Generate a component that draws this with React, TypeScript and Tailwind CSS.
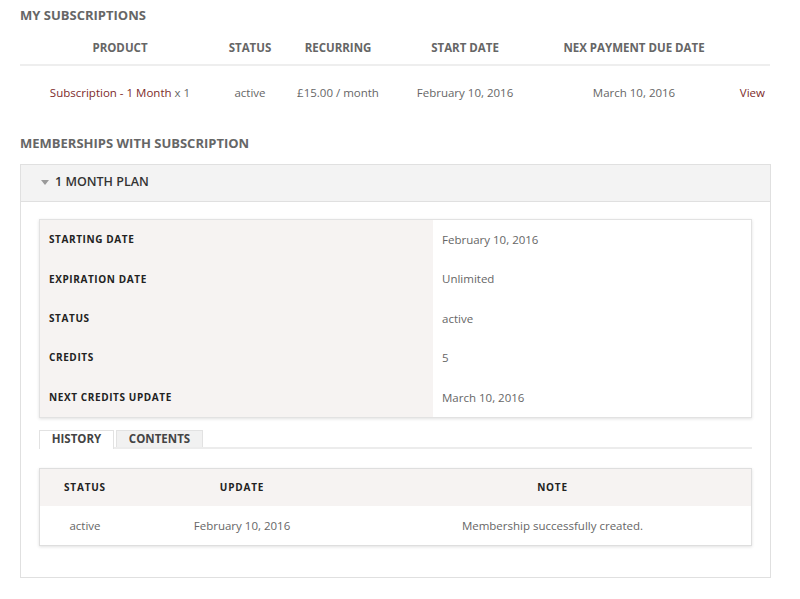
import React from "react";

const font = { fontFamily: '"Open Sans", "Liberation Sans", sans-serif' };

function InfoRow({ label, value }: { label: string; value: string }) {
  return (
    <div className="flex h-[39.4px]">
      <div className="w-[393px] bg-[#f6f3f2] flex items-center pl-[9px] text-[10px] font-bold tracking-[0.06em] text-[#222]">
        {label}
      </div>
      <div className="flex-1 flex items-center pl-[9px] text-[11.5px] text-[#666]">{value}</div>
    </div>
  );
}

export default function App() {
  return (
    <div style={font} className="bg-white w-[800px] h-[599px] px-[20px] pt-[6px] text-[#666]">
      <h2 className="text-[13px] leading-[18px] font-bold text-[#666] m-0">MY SUBSCRIPTIONS</h2>
      <div className="w-[750px] mt-[4px]">
        <div className="flex h-[38px] pt-[3px] items-center border-b-2 border-[#eeeeee] text-[11.5px] font-bold text-[#666]">
          <div className="w-[200px] text-center">PRODUCT</div>
          <div className="w-[60px] text-center">STATUS</div>
          <div className="w-[116px] text-center">RECURRING</div>
          <div className="w-[138px] text-center">START DATE</div>
          <div className="w-[200px] text-center">NEX PAYMENT DUE DATE</div>
          <div className="flex-1" />
        </div>
        <div className="flex h-[54px] items-center text-[11.5px] text-[#666]">
          <div className="w-[200px] text-center">
            <span className="text-[#7d2b2b]">Subscription - 1 Month</span> x 1
          </div>
          <div className="w-[60px] text-center">active</div>
          <div className="w-[116px] text-center">£15.00 / month</div>
          <div className="w-[138px] text-center">February 10, 2016</div>
          <div className="w-[200px] text-center">March 10, 2016</div>
          <div className="flex-1 text-right pr-[5px] text-[#7d2b2b]">View</div>
        </div>
      </div>

      <h2 className="text-[13px] leading-[18px] font-bold text-[#666] m-0 mt-[14px]">MEMBERSHIPS WITH SUBSCRIPTION</h2>

      <div className="mt-[12px] w-[751px] border border-[#e0e0e0]">
        <div className="h-[37px] bg-[#f3f3f3] border-b border-[#e0e0e0] flex items-center pl-[20px]">
          <svg width="8" height="6" viewBox="0 0 8 6" className="mr-[6px]">
            <polygon points="0,0 8,0 4,5" fill="#9a9a9a" />
          </svg>
          <span className="text-[12.5px] leading-[16px] font-semibold text-[#333] -mt-[2px]">1 MONTH PLAN</span>
        </div>
        <div className="pt-[17px] pb-[31px] pl-[18px] pr-[18px]">
          <div className="border border-[#e2e2e2] shadow-[0_1px_3px_rgba(0,0,0,0.12)]">
            <InfoRow label="STARTING DATE" value="February 10, 2016" />
            <InfoRow label="EXPIRATION DATE" value="Unlimited" />
            <InfoRow label="STATUS" value="active" />
            <InfoRow label="CREDITS" value="5" />
            <InfoRow label="NEXT CREDITS UPDATE" value="March 10, 2016" />
          </div>

          <div className="mt-[14px] flex items-end border-b-2 border-[#ececec] h-[17px]">
            <div className="h-[19px] -mb-[2px] pb-[2px] w-[75px] border border-b-0 border-[#e2e2e2] bg-white flex items-center justify-center text-[11.5px] font-bold text-[#444]">
              HISTORY
            </div>
            <div className="ml-[2px] h-[17px] w-[87px] border border-b-0 border-[#e2e2e2] bg-[#f1f1f1] flex items-center justify-center text-[11.5px] font-bold text-[#444]">
              CONTENTS
            </div>
          </div>

          <div className="mt-[19px] border border-[#dedede] shadow-[0_1px_3px_rgba(0,0,0,0.12)]">
            <div className="flex h-[37px] items-center bg-[#f6f3f2] text-[10px] font-bold tracking-[0.08em] text-[#222]">
              <div className="w-[90px] text-center">STATUS</div>
              <div className="w-[224px] text-center">UPDATE</div>
              <div className="flex-1 text-center">NOTE</div>
            </div>
            <div className="flex h-[39px] items-center text-[11.5px] text-[#666]">
              <div className="w-[90px] text-center">active</div>
              <div className="w-[224px] text-center">February 10, 2016</div>
              <div className="flex-1 text-center">Membership successfully created.</div>
            </div>
          </div>
        </div>
      </div>
    </div>
  );
}
